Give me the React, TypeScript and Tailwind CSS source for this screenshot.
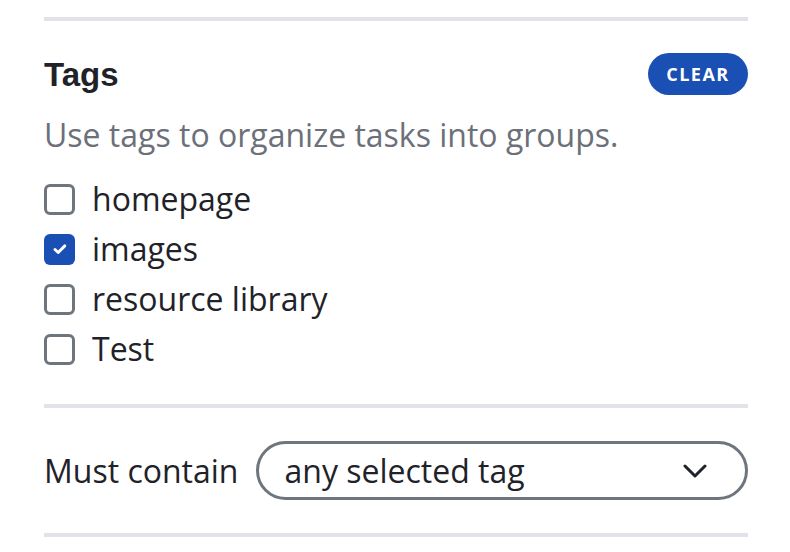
import React, { useState } from 'react';

const tags = ['homepage', 'images', 'resource library', 'Test'];

const Divider = ({ className = '' }: { className?: string }) => (
  <div className={`h-[4px] w-full bg-[#e1e3e8] ${className}`} />
);

export default function App() {
  const [checked, setChecked] = useState<string[]>(['images']);

  const toggle = (tag: string) =>
    setChecked((prev) => (prev.includes(tag) ? prev.filter((t) => t !== tag) : [...prev, tag]));

  return (
    <div className="min-h-[552px] bg-white" style={{ fontFamily: '"Open Sans", sans-serif' }}>
      <div className="ml-[44px] w-[704px] pt-[17px]">
        <Divider />

        {/* Header */}
        <div className="mt-[32px] flex h-[42px] items-center justify-between">
          <h2 className="font-['Liberation_Sans',Arial,sans-serif] text-[33px] font-bold leading-none text-[#1f2329]">
            Tags
          </h2>
          <button
            onClick={() => setChecked([])}
            className="flex h-[42px] w-[100px] items-center justify-center rounded-full bg-[#1a4fb4] text-[18px] font-bold tracking-[1.5px] text-white"
          >
            CLEAR
          </button>
        </div>

        <p className="mt-[20px] text-[32px] leading-[40px] text-[#6b7079]">
          Use tags to organize tasks into groups.
        </p>

        {/* Tag list */}
        <ul className="mt-[19px]">
          {tags.map((tag) => {
            const on = checked.includes(tag);
            return (
              <li key={tag} className="flex h-[50px] items-center gap-[17px]">
                <button
                  onClick={() => toggle(tag)}
                  className={`flex h-[31px] w-[31px] items-center justify-center rounded-[6px] ${
                    on ? 'bg-[#1a4fb4]' : 'border-[3px] border-[#6e757c] bg-white'
                  }`}
                >
                  {on && (
                    <svg width="16" height="16" viewBox="0 0 16 16" fill="none">
                      <path d="M3 8.5l3.2 3 6.6-6.6" stroke="white" strokeWidth="3" strokeLinecap="round" strokeLinejoin="round" />
                    </svg>
                  )}
                </button>
                <span className="text-[32px] leading-none text-[#1f2329]">{tag}</span>
              </li>
            );
          })}
        </ul>

        <Divider className="mt-[30px]" />

        {/* Match mode */}
        <div className="mt-[33px] flex items-center gap-[18px]">
          <span className="text-[32px] leading-none text-[#1f2329]">Must contain</span>
          <div className="flex h-[59px] flex-1 items-center justify-between rounded-full border-[3px] border-[#6e757c] pl-[25px] pr-[38px]">
            <span className="text-[32px] leading-none text-[#1f2329]">any selected tag</span>
            <svg width="24" height="14" viewBox="0 0 24 14" fill="none">
              <path d="M2 2l10 10 10-10" stroke="#1f2329" strokeWidth="3" strokeLinecap="round" strokeLinejoin="round" />
            </svg>
          </div>
        </div>

        <Divider className="mt-[33px]" />
      </div>
    </div>
  );
}
